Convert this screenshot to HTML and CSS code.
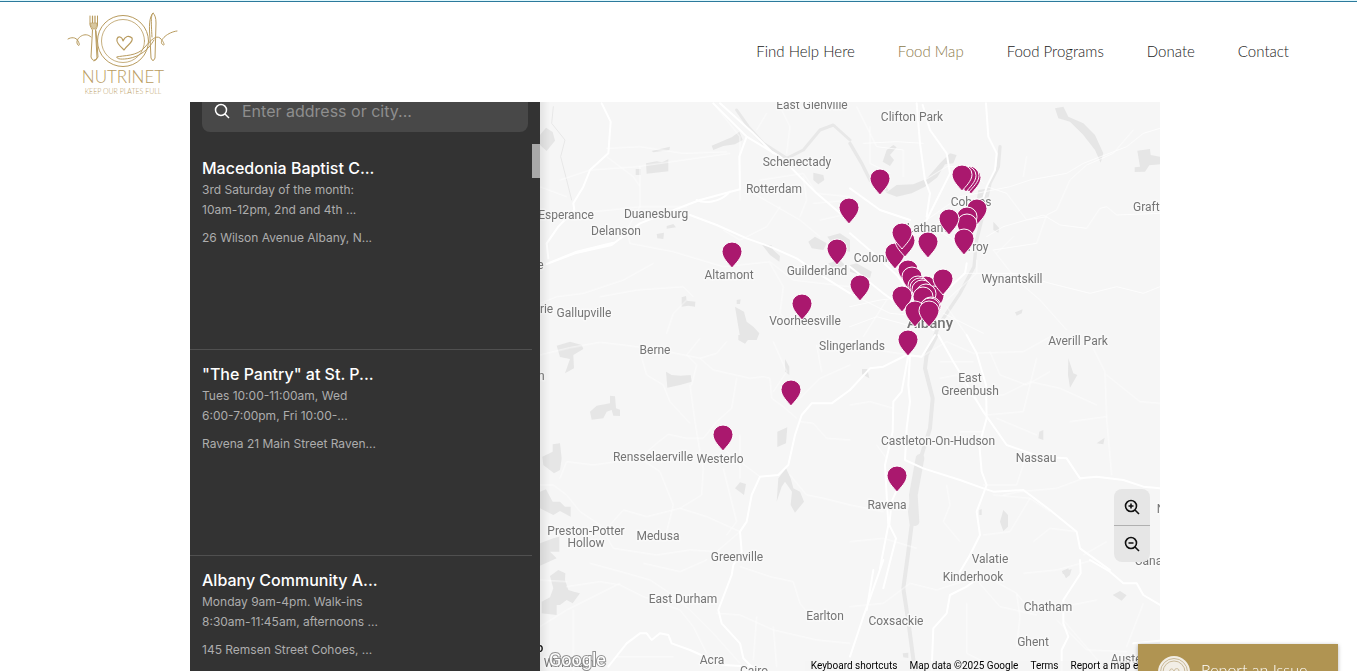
FILE: index.html
```html
<!DOCTYPE html>
<html lang="en">
<head>
<meta charset="utf-8">
<meta name="viewport" content="width=device-width, initial-scale=1">
<title>Food Map | Nutrinet</title>
<link rel="stylesheet" href="styles.css">
</head>
<body>
<header class="site-header">
  <a class="logo" href="#" aria-label="Nutrinet home">
    <svg width="112" height="88" viewBox="0 0 112 88" fill="none" stroke="#b89b5e" stroke-width="1" stroke-linecap="round" stroke-linejoin="round">
      <circle cx="56" cy="30" r="25.5"/>
      <circle cx="56" cy="30" r="21.5" stroke-width=".8"/>
      <path d="M57 39C52 34 49 31 50 28C51 25 55 25 56 30C58 25 62 24 65 27C67 31 60 34 57 39Z" stroke-width="1.2"/>
      <path d="M23 5V14Q24 17 25.500 19L24 46Q26 52 30 47L28.500 19Q30 17 30.500 14V5M29 20L31 46Q29 50 27 50"/>
      <path d="M25.500 5V13M28 5V13" stroke-width="1.2"/>
      <path d="M23.500 12H30V15L28 18H26L24 15Z" fill="#d8c79f" stroke-width=".6"/>
      <path d="M1 28C4 26 9 26 11 30C14 35 11 36 10 32C9 27 18 20 24 26M86 2C82 6 82 16 83 27L84 47Q86 52 88 47L89 12C89 7 88 4 86 2C84 4 84 10 85 26M50 46C56 44 70 46 78 36C84 29 89 24 93 27C98 32 98 36 95 33C92 29 101 21 110 20M50 46C48 49 61 49 70 45C80 40 84 34 87 29"/>
      <g fill="#b89b5e" stroke="none">
        <text class="logo-name" x="56" y="72" text-anchor="middle">NUTRINET</text>
        <text class="logo-tag" x="56" y="83" text-anchor="middle">KEEP OUR PLATES FULL</text>
      </g>
    </svg>
  </a>
  <nav class="main-nav" aria-label="Main">
    <a href="#">Find Help Here</a>
    <a href="#" class="current" aria-current="page">Food Map</a>
    <a href="#">Food Programs</a>
    <a href="#">Donate</a>
    <a href="#">Contact</a>
  </nav>
</header>

<main class="page">
  <div class="locator">
    <aside class="sidebar">
      <form class="search">
        <svg width="16" height="16" viewBox="0 0 16 16" fill="none" stroke="#fff" stroke-width="1.5" aria-hidden="true"><circle cx="7" cy="7" r="5.5"/><path d="M11 11l4 4"/></svg>
        <input type="text" placeholder="Enter address or city..." aria-label="Enter address or city">
      </form>
      <div class="results">
        <ul class="list">
          <li class="place"><h2>Macedonia Baptist C...</h2><p>3rd Saturday of the month:<br>10am-12pm, 2nd and 4th ...</p><p class="address">26 Wilson Avenue Albany, N...</p></li>
          <li class="place"><h2>"The Pantry" at St. P...</h2><p>Tues 10:00-11:00am, Wed<br>6:00-7:00pm, Fri 10:00-...</p><p class="address">Ravena 21 Main Street Raven...</p></li>
          <li class="place"><h2>Albany Community A...</h2><p>Monday 9am-4pm. Walk-ins<br>8:30am-11:45am, afternoons ...</p><p class="address">145 Remsen Street Cohoes, ...</p></li>
        </ul>
        <span class="thumb"></span>
      </div>
    </aside>

    <section class="map" aria-label="Map">
      <svg class="canvas" width="100%" height="100%">
        <defs>
          <path id="pin" d="M0 0C-3-4-10-10-10-16.500A10 9.500 0 0 1 10-16.500C10-10 3-4 0 0Z"/>
        </defs>
        <g transform="translate(0 -2) scale(.33333)" fill="none" stroke-linejoin="round" stroke-linecap="round">
          <!-- parks and lakes -->
          <g class="land">
            <path d="M0 105L18 83L38 96L45 122L20 153L0 135ZM287 207h15v18h-15zM318 190L350 184L366 187L385 178V214L320 221ZM515 137L550 122L575 112L598 95L608 120L585 133L550 138L520 150ZM335 153L390 140L388 150L340 157ZM820 218L850 225L853 240L835 253L820 240ZM805 425L825 410L860 430L850 450L815 445ZM665 433L695 436L700 450L720 468L718 485L690 465ZM585 620L612 635L620 665L640 680L658 700L650 720H602L595 680ZM590 600L602 598L600 612L590 612ZM425 592L438 588L440 602L466 605L465 620L445 617L425 620ZM350 402L372 398L370 417L352 415ZM380 378L400 372L408 382L380 386ZM862 410L900 400L930 420V455L890 450ZM865 490L900 480L915 495L880 510Z"/>
            <path transform="translate(930 0)" d="M615 25L640 20L655 50L700 70L735 105L760 160L752 188L735 150L700 105L660 65L625 55ZM862 152L900 147L902 165L930 170V193L898 196L885 215L854 216V202L870 200ZM108 278L140 255L190 253L230 236L270 190L300 160L320 165L310 190L285 193L262 232L225 260L185 280L140 290ZM98 185L110 150L130 135L140 142L120 165L132 180L120 198ZM385 270L418 265L410 290L396 325L380 300ZM430 365L448 385L445 398L430 390ZM20 490L65 515L60 535L0 515V495ZM495 637L518 628L515 640L500 647Z"/>
            <path transform="translate(0 705)" d="M50 32L90 20L125 30L130 42L100 60L102 100L75 115L90 72L60 66ZM378 110L395 120L422 122L452 120L455 140L420 150L382 158ZM150 230L170 212L210 205V182L225 184L228 220L240 224V243L220 242L215 225L200 230L190 250L155 254ZM7 365L38 350V328L60 325L65 370L60 405L42 415L10 390ZM0 470L18 463L38 500H60L75 515H92V545L60 528L40 540L0 520ZM0 625L40 610L58 605V650H30L50 670L0 692ZM712 290L742 277L738 325L712 336ZM710 500L715 430L738 400L752 430L760 460L780 470L792 500L765 533L752 510L756 470L735 440L725 455ZM585 460L600 442L618 447L612 480ZM595 0H635L615 26L595 15ZM735 72L748 95V120L735 110Z"/>
            <path transform="translate(930 705)" d="M36 102H52L58 130L36 118ZM655 70L670 115L682 120L660 158L654 120ZM568 290L580 285V315L565 310ZM450 560L460 525L474 540V575L460 588ZM740 325L764 308L760 328ZM636 708L655 700L660 715L650 720L638 716ZM388 525L395 522V540L388 540Z"/>
            <path transform="translate(0 1380)" d="M30 48L55 30L76 40L75 60L85 90L102 95L120 100L98 130L80 120L60 135H50V165L5 160V125L30 112L40 85Z"/>
            <path transform="translate(930 1380)" d="M638 35L665 27L660 45L648 55ZM788 105L810 93L830 106L815 122ZM158 280L175 278V294L160 292Z"/>
          </g>
          <!-- rivers -->
          <g class="river">
            <path d="M590 30L625 80L670 130L740 175L790 150L840 90L880 75L930 120" stroke-width="9"/>
            <path transform="translate(930 0)" d="M0 130L35 190L60 240L110 270M450 140L445 200L420 250L400 340L380 420L372 500L330 580L270 670L255 705" stroke-width="10"/>
            <path transform="translate(930 705)" d="M260 0L230 60L225 100L248 190L240 280L215 360L200 400L180 530L185 570L175 650L160 760L175 860L195 1010" stroke-width="12"/>
            <path transform="translate(930 705)" d="M210 370L190 480L195 560" stroke-width="26"/>
            <path d="M40 20L35 70L75 120L62 170L80 240L95 300" stroke-width="3"/>
          </g>
          <!-- highways -->
          <g class="highway">
            <path d="M185 10L212 65L205 160L150 210L130 260L100 310L103 330L55 380L20 430L25 475M20 492L105 460L215 435L300 370L440 315L480 300L600 268L598 170L620 110L520 10M20 492L110 455L220 428M620 110L720 170L830 280L930 365M450 345L530 375L620 415L690 440L770 475L850 530L930 580M570 275C540 310 490 310 470 300M540 10L640 100L700 160"/>
            <path transform="translate(930 0)" d="M200 10L210 130L225 240L240 280L230 350M218 15L240 90L290 160L300 220L260 300L230 360L180 410M408 10L415 110L440 160L435 210L410 260L380 360M0 265L90 330L180 360M0 400L70 460L140 525L190 590M0 500L100 580L170 630L250 690M350 490L345 520L290 570L240 660"/>
            <path transform="translate(930 705)" d="M255 0L215 65L170 60L100 95L60 100L0 165M180 60L175 150L180 200L170 280L165 375L220 400L330 435L400 460L430 470L520 465L600 525L680 590L690 640L780 705M175 60L155 170L130 200L128 290L105 390L115 570L90 700M350 0L380 55L408 150L410 250L388 330L395 410L410 450L380 530L390 600L360 660L330 710M265 0L310 80L400 230L470 330L570 365L650 370L690 430L740 425L820 435L880 455L930 460M165 410L125 500L118 570L138 610L120 680L100 760"/>
            <path transform="translate(0 705)" d="M930 165L875 205L815 205L785 240L765 300L745 390L715 420L660 425L635 480L620 560L600 590L605 650L580 690L575 720L535 825L545 865L600 925L610 970L650 1010"/>
            <path transform="translate(0 1380)" d="M205 320L260 250L300 220L320 220L335 240L360 220L385 225L395 250L450 270L550 315L640 320"/>
            <path transform="translate(930 1380)" d="M720 0L780 35L820 70L860 70L880 105L930 135M398 45L350 80L300 105L290 160L250 205L245 330M690 0L692 40L640 120L640 190L655 230L635 270L635 333M100 0L65 100L40 170L0 290M70 30L50 150M930 242L850 250"/>
          </g>
          <!-- local roads -->
          <g class="local">
            <path d="M200 145L300 140L430 160L560 155M300 260L280 230L200 170M60 240L150 210L290 200L430 180L570 160M100 340L210 330L300 320L440 320M270 430L400 455L550 500L690 485L760 540L930 560M0 610L50 590L130 580L250 540L340 490M460 590L430 560L290 570L180 590M440 600L400 640L380 700M300 200V320L260 390L270 430M640 280L780 360L840 410M660 240L790 220L830 280M790 230L800 300L780 350M550 390L600 420L680 380L720 320M690 490L730 560L720 640L770 690M0 260L80 290M520 10L600 110L600 300M720 20L750 80L740 160M680 40L650 90M830 280L930 290M820 310L930 300M840 360L930 340"/>
            <path transform="translate(930 0)" d="M230 360L330 290L480 260L540 240L650 220L700 190L830 140L880 100L930 85M430 450L560 430L590 345L620 330L660 240L710 195L790 160L850 90M410 410L460 380L580 345L630 375L710 385L750 325L770 320L800 345L930 340M430 450L500 540L570 600L650 690M440 460L490 410M410 260L470 280L530 360L590 350M530 170L520 230M20 20L80 140L160 150L160 230M40 130L140 125L220 130M60 80V190L120 220M225 240L290 200L350 200L400 250M180 410L260 390L330 430L400 440M110 470L180 410M0 620L90 600L190 590M60 460L180 530L270 560M340 520L500 520L600 550L720 580L800 560L880 580L930 560M0 580L120 640L230 650M40 710L110 600M0 680L80 650L190 680M280 640L400 700M290 620L350 705M380 480V520L290 600"/>
            <path transform="translate(0 705)" d="M0 60L90 38L180 22L250 30L360 45L480 70L530 55L560 20M480 70L520 105L630 130L670 125L690 130L695 190L730 215L770 250M480 10L440 60L470 90L455 150M300 50L320 120L370 150L390 200L450 265M450 150L465 260L480 350L490 400L485 480L420 520L320 545L250 525L210 570M300 370L350 325L385 298L440 310L490 310L530 260L575 220L590 130M0 450H40L80 480L120 530L180 570L220 640L350 660L450 645L530 650L600 590M60 430L80 380L160 390L300 370L360 410L400 510L380 590M560 350L660 425M550 400L590 560L560 600M600 300L600 430M420 520L500 545L600 590M700 20L740 110L700 170M930 90L840 130L780 190M780 260L820 265L860 310L930 315M750 420L800 480L850 490L930 510M830 30L845 110"/>
            <path transform="translate(930 705)" d="M0 20L110 50L215 65L290 20L370 55L520 50L610 0M420 50L450 120L530 150L600 110M320 180H460L540 140L630 160L740 210M270 80L370 80M270 130L320 120L410 240L520 230L560 70M440 250L560 300M330 290H400M730 40L765 110L770 250L785 420M770 120L870 200L930 205M660 260L770 245M0 210L60 200L130 220M0 510L100 530M0 620L100 610L200 640M430 480L540 490L600 530M290 450L300 510L280 560L330 620M400 600L480 590L540 490M550 620L600 580L680 590M400 450L500 450L530 360M80 330L110 370M460 480L510 470L620 460L700 430M700 660L770 620"/>
            <path transform="translate(0 1380)" d="M80 80L180 65L240 75L310 110L420 150L460 200L500 280M0 200L80 150L240 70M150 10L260 40L330 60L390 100L450 150L520 220L600 310M310 10L420 35L500 0M600 20L690 50L760 65L780 130L800 155M530 160L600 165L700 210L830 240L930 250M700 200L710 320M650 170L640 300M0 60L80 65M230 290H400M100 150V333"/>
            <path transform="translate(930 1380)" d="M0 140L100 130L180 70L260 90L400 45L500 100L540 150M350 130V280L430 320M500 100L510 170L500 260M620 180L710 270L830 275M640 180L760 320M640 140L740 120M830 260L880 130M380 60L450 140L560 165M730 0L620 30L520 40"/>
          </g>
        </g>
        <g class="labels" transform="translate(-540 -102)">
          <text x="812" y="109">East Glenville</text><text x="912" y="121">Clifton Park</text>
          <text x="797" y="166">Schenectady</text><text x="774" y="193">Rotterdam</text>
          <text x="566" y="219">Esperance</text><text x="656" y="218">Duanesburg</text>
          <text x="616" y="235">Delanson</text><text x="729" y="279">Altamont</text>
          <text x="817" y="275">Guilderland</text><text x="874" y="262">Colonie</text>
          <text x="971" y="206">Cohoes</text><text x="927" y="232">Latham</text>
          <text x="977" y="251">Troy</text><text x="1012" y="283">Wynantskill</text>
          <text x="1153" y="211">Grafton</text><text x="805" y="325">Voorheesville</text>
          <text x="584" y="317">Gallupville</text><text x="540" y="313">harie</text>
          <text x="539" y="269">le</text><text x="538" y="380">on</text>
          <text x="655" y="354">Berne</text><text x="852" y="350">Slingerlands</text>
          <text class="city" x="930" y="328">Albany</text><text x="1078" y="345">Averill Park</text>
          <text x="970" y="382">East</text><text x="970" y="395">Greenbush</text>
          <text x="938" y="445">Castleton-On-Hudson</text><text x="1036" y="462">Nassau</text>
          <text x="653" y="461">Rensselaerville</text><text x="720" y="463">Westerlo</text>
          <text x="887" y="509">Ravena</text><text x="1180" y="513">New Leb</text>
          <text x="586" y="535">Preston-Potter</text><text x="586" y="547">Hollow</text>
          <text x="658" y="540">Medusa</text><text x="737" y="561">Greenville</text>
          <text x="990" y="563">Valatie</text><text x="973" y="581">Kinderhook</text>
          <text x="1155" y="565">Canaan</text><text x="683" y="603">East Durham</text>
          <text x="1048" y="611">Chatham</text><text x="825" y="620">Earlton</text>
          <text x="896" y="625">Coxsackie</text><text x="1033" y="646">Ghent</text>
          <text x="712" y="664">Acra</text><text x="754" y="675">Cairo</text>
          <text x="1136" y="663">Austerlitz</text><text x="569" y="667">Windham</text>
          <text class="dark" x="538" y="652">to</text>
        </g>
        <g class="pins" transform="translate(-540 -101)">
          <use href="#pin" x="880" y="194"/><use href="#pin" x="849" y="223"/><use href="#pin" x="732" y="267"/>
          <use href="#pin" x="837" y="264"/><use href="#pin" x="860" y="300"/><use href="#pin" x="802" y="319"/>
          <use href="#pin" x="791" y="405"/><use href="#pin" x="723" y="450"/><use href="#pin" x="897" y="491"/>
          <use href="#pin" x="908" y="355"/>
          <use href="#pin" x="971" y="193"/><use href="#pin" x="969" y="191"/><use href="#pin" x="966" y="191"/><use href="#pin" x="962" y="190"/>
          <use href="#pin" x="977" y="224"/><use href="#pin" x="967" y="232"/><use href="#pin" x="967" y="239"/>
          <use href="#pin" x="949" y="234"/><use href="#pin" x="964" y="254"/>
          <use href="#pin" x="928" y="257"/><use href="#pin" x="895" y="268"/><use href="#pin" x="905" y="256"/><use href="#pin" x="902" y="248"/>
          <use href="#pin" x="908" y="285"/><use href="#pin" x="912" y="292"/><use href="#pin" x="926" y="301"/>
          <use href="#pin" x="918" y="301"/><use href="#pin" x="920" y="303"/><use href="#pin" x="922" y="305"/>
          <use href="#pin" x="934" y="311"/><use href="#pin" x="926" y="309"/><use href="#pin" x="943" y="294"/>
          <use href="#pin" x="902" y="311"/><use href="#pin" x="923" y="312"/><use href="#pin" x="931" y="322"/>
          <use href="#pin" x="930" y="323"/><use href="#pin" x="915" y="326"/><use href="#pin" x="929" y="326"/>
        </g>
      </svg>
      <a class="google" href="#">Google</a>
      <div class="zoom">
        <button type="button" aria-label="Zoom in"><svg width="16" height="16" viewBox="0 0 16 16"><circle cx="7" cy="7" r="5.500"/><path d="M11 11l4 4M4.500 7h5M7 4.500v5"/></svg></button>
        <button type="button" aria-label="Zoom out"><svg width="16" height="16" viewBox="0 0 16 16"><circle cx="7" cy="7" r="5.500"/><path d="M11 11l4 4M4.500 7h5"/></svg></button>
      </div>
      <div class="legal">
        <button type="button">Keyboard shortcuts</button>
        <span>Map data ©2025 Google</span>
        <a href="#">Terms</a>
        <a href="#">Report a map error</a>
      </div>
    </section>
  </div>
</main>

<button class="report" type="button">
  <svg width="32" height="32" viewBox="0 0 32 32" fill="none" stroke="#c9b998" aria-hidden="true"><circle cx="16" cy="16" r="16" fill="#f2eee6" stroke="none"/><circle cx="16" cy="16" r="13.500"/><circle cx="16" cy="16" r="11"/><path d="M16 21C13 18 11 16 12 14C13 12 15 13 16 15C17 12 20 12 21 14C21 17 18 18 16 21Z"/></svg>
  <span>Report an Issue</span>
</button>
</body>
</html>
```
FILE: styles.css
```css
* { box-sizing: border-box; }

body {
  margin: 0;
  height: 100vh;
  display: flex;
  flex-direction: column;
  overflow: hidden;
  background: #fff;
  font-family: Inter, "Liberation Sans", sans-serif;
}

a { color: inherit; text-decoration: none; }
button { font: inherit; color: inherit; border: 0; background: none; padding: 0; cursor: pointer; }

.site-header {
  flex: none;
  height: 102px;
  display: flex;
  justify-content: space-between;
  align-items: center;
  padding: 0 68px 0 67px;
  background: linear-gradient(#dff8fd 1px, #2c7a9c 1px, #2c7a9c 2px, #fff 2px);
}
.logo { display: block; height: 80px; }
.logo svg { display: block; overflow: visible; }
.logo-name { font: 300 17px Lato, sans-serif; }
.logo-tag { font: 300 7px Lato, sans-serif; }

.main-nav {
  display: flex;
  gap: 43px;
  font: 300 15px/24px Lato, sans-serif;
  color: #222;
}
.main-nav .current { color: #8c7a4b; }

.page {
  flex: 1;
  min-height: 0;
  display: flex;
  justify-content: center;
  padding-right: 7px;
}
.locator {
  display: flex;
  width: 100%;
  max-width: 970px;
  overflow: hidden;
}

.sidebar {
  flex: none;
  width: 350px;
  display: flex;
  flex-direction: column;
  background: #333;
  overflow: hidden;
}
.search {
  flex: none;
  display: flex;
  align-items: center;
  gap: 12px;
  height: 42px;
  margin: -12px 12px 12px;
  padding: 0 12px;
  border-radius: 8px;
  background: #484848;
}
.search input {
  flex: 1;
  min-width: 0;
  border: 0;
  padding: 0;
  background: none;
  outline: 0;
  color: #fff;
  font: 400 16px/24px Inter, sans-serif;
}
.search input::placeholder { color: #8e8e8e; opacity: 1; }

.results { position: relative; flex: 1; min-height: 0; overflow: hidden; }
.list { margin: 0 8px 0 0; padding: 0; list-style: none; }
.place {
  height: 206px;
  padding: 12px;
  border-bottom: 1px solid #505050;
  color: #adadad;
  font-size: 12px;
  line-height: 20px;
}
.place h2 { margin: 0; font-size: 16px; font-weight: 500; line-height: 24px; color: #fff; }
.place p { margin: 0; }
.place .address { margin-top: 8px; }
.thumb { position: absolute; top: 0; right: 0; width: 8px; height: 34px; background: #a8a8a8; }

.map {
  position: relative;
  flex: 1;
  min-width: 0;
  overflow: hidden;
  background: #f6f6f6;
  font-family: Roboto, sans-serif;
}
.map::after {
  content: "";
  position: absolute;
  inset: 0 auto 0 0;
  width: 10px;
  background: linear-gradient(90deg, rgba(0, 0, 0, .07), transparent);
}
.canvas { display: block; }
.land { fill: #e6e6e6; stroke: none; }
.river { stroke: #e8e8e8; }
.highway { stroke: #fff; stroke-width: 6px; }
.local { stroke: #fff; stroke-width: 3px; opacity: .75; }
.labels text {
  font-size: 12px;
  fill: #757575;
  stroke: #f9f9f9;
  stroke-width: 3px;
  paint-order: stroke;
  stroke-linejoin: round;
  text-anchor: middle;
}
.labels .city { font-size: 15px; font-weight: 500; }
.labels .dark { fill: #111; font-weight: 500; }
.pins { fill: #aa186e; stroke: #fff; stroke-width: 1px; }

.google {
  position: absolute;
  left: 9px;
  bottom: 0;
  font: 400 18px/22px Roboto, sans-serif;
  color: #fff;
  -webkit-text-stroke: 2px #929292;
  paint-order: stroke;
}

.zoom {
  position: absolute;
  top: 387px;
  right: 10px;
  width: 36px;
  border-radius: 8px;
  overflow: hidden;
  background: #e6e6e6;
}
.zoom button { display: flex; align-items: center; justify-content: center; width: 100%; height: 36px; }
.zoom button + button { height: 37px; border-top: 1px solid #b0b0b0; }
.zoom svg { fill: none; stroke: #111; stroke-width: 1.6px; }

.legal {
  position: absolute;
  right: 0;
  bottom: 0;
  display: flex;
  gap: 12px;
  padding: 0 6px;
  white-space: nowrap;
  background: rgba(245, 245, 245, .7);
  font-size: 10px;
  line-height: 10px;
  color: #000;
}

.report {
  position: fixed;
  right: 19px;
  bottom: -28px;
  display: flex;
  align-items: center;
  gap: 11px;
  width: 200px;
  height: 55px;
  padding: 0 20px;
  background: #b09452;
  color: #fff;
  box-shadow: 0 1px 4px rgba(0, 0, 0, .3);
  font: 300 16px/24px Lato, sans-serif;
  white-space: nowrap;
}
.report span { padding-bottom: 4px; }
```
